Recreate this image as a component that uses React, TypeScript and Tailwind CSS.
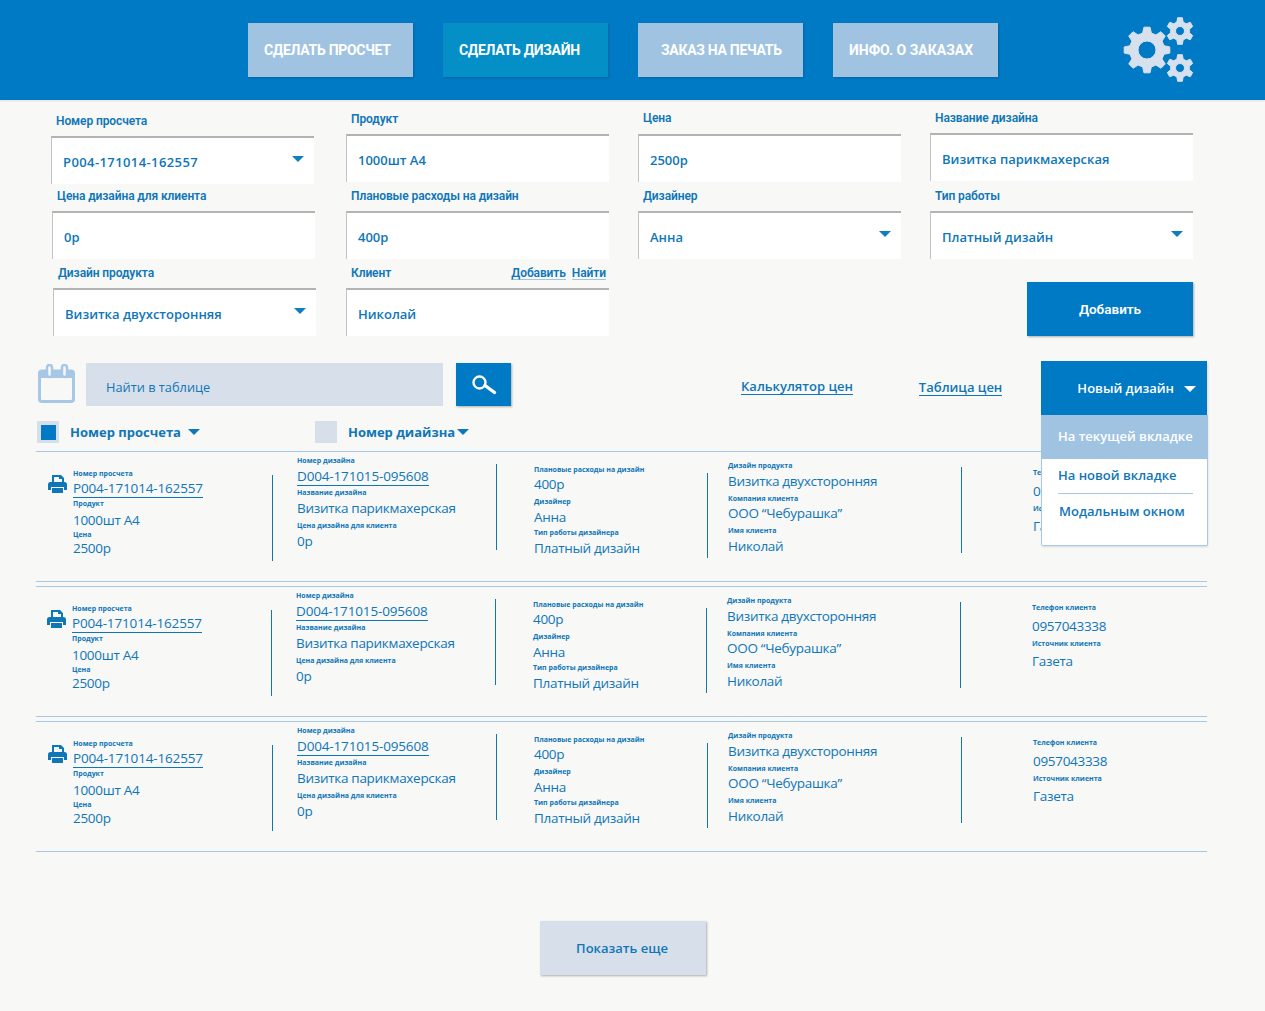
import type { ReactNode } from "react"

const blue = "text-[#0f76b8]"

function gearPath(cx: number, cy: number, outer: number, root: number, hole: number, teeth: number) {
  const pts: string[] = []
  const step = (Math.PI * 2) / teeth
  for (let i = 0; i < teeth; i++) {
    const a = i * step - Math.PI / 2
    const corners: [number, number][] = [
      [root, a - step * 0.32],
      [outer, a - step * 0.17],
      [outer, a + step * 0.17],
      [root, a + step * 0.32],
    ]
    for (const [r, t] of corners) {
      pts.push(`${(cx + r * Math.cos(t)).toFixed(2)} ${(cy + r * Math.sin(t)).toFixed(2)}`)
    }
  }
  const ring = `M${cx - hole} ${cy}a${hole} ${hole} 0 1 0 ${hole * 2} 0a${hole} ${hole} 0 1 0 ${-hole * 2} 0z`
  return `M${pts.join("L")}z${ring}`
}

function Gears() {
  return (
    <svg width="75" height="70" viewBox="0 0 75 70" className="ml-[123px] mt-[-7px]">
      <g fill="#d7e1ee" fillRule="evenodd" stroke="#d7e1ee" strokeWidth="1" strokeLinejoin="round">
        <path d={gearPath(26, 34, 23, 17.5, 9, 8)} />
        <path d={gearPath(59, 15, 13.5, 9.5, 4.5, 6)} />
        <path d={gearPath(59, 52, 13.5, 9.5, 4.5, 6)} />
      </g>
    </svg>
  )
}

function NavButton({ children, active, className = "" }: { children: ReactNode; active?: boolean; className?: string }) {
  return (
    <div
      className={`flex h-[54px] w-[165px] items-center pt-px text-[14px] font-bold text-white shadow-[1px_1px_2px_rgba(0,50,90,0.3)] font-['Roboto',sans-serif] ${
        active ? "bg-[#0490c7]" : "bg-[#a1c3e2]"
      } ${className}`}
    >
      {children}
    </div>
  )
}

function Triangle({ className }: { className: string }) {
  return <span className={`block h-0 w-0 border-x-[6px] border-t-[6px] border-x-transparent ${className}`} />
}

function Field({
  label,
  value,
  select,
  className = "",
  labelClass = "",
  valueClass = "",
  links,
}: {
  label: string
  value: string
  select?: boolean
  className?: string
  labelClass?: string
  valueClass?: string
  links?: boolean
}) {
  return (
    <div className={className}>
      <div className="mb-[6px] flex h-[18px] items-center justify-between">
        <span className={`text-[12px] leading-[18px] font-semibold tracking-[-0.1px] ${blue} font-['Roboto',sans-serif] ${labelClass}`}>
          {label}
        </span>
        {links && (
          <span className={`flex gap-[6px] text-[12px] font-semibold tracking-[-0.1px] ${blue} font-['Roboto',sans-serif]`}>
            <span className="border-b border-[#9fc3e3] leading-[12px]">Добавить</span>
            <span className="mr-[3px] border-b border-[#9fc3e3] leading-[12px]">Найти</span>
          </span>
        )}
      </div>
      <div className="flex h-[48px] items-center justify-between border-t-2 border-l border-t-[#b3b3b3] border-l-[#c4c4c4] bg-white pl-[11px] pr-[10px] pt-[3px]">
        <span className={`text-[13px] font-semibold ${blue} font-['Open_Sans',sans-serif] ${valueClass}`}>{value}</span>
        {select && <Triangle className="mt-[-7px] border-t-[#0f7dc2]" />}
      </div>
    </div>
  )
}

function Form() {
  return (
    <div className="flex h-[236px] pl-[51px]">
      <div className="mt-[12px] w-[263px]">
        <Field label="Номер просчета" value="P004-171014-162557" select labelClass="ml-[5px]" valueClass="tracking-[0.4px]" />
        <Field label="Цена дизайна для клиента" value="0р" className="-mr-px ml-px mt-[3px]" labelClass="ml-[5px]" />
        <Field label="Дизайн продукта" value="Визитка двухсторонняя" select className="-mr-[2px] ml-[2px] mt-[5px]" labelClass="ml-[5px]" />
      </div>
      <div className="ml-[32px] mt-[10px] w-[263px]">
        <Field label="Продукт" value="1000шт А4" labelClass="ml-[5px]" valueClass="mt-px" />
        <Field label="Плановые расходы на дизайн" value="400р" className="mt-[5px]" labelClass="ml-[5px]" />
        <Field label="Клиент" value="Николай" className="mt-[5px]" labelClass="ml-[5px]" links />
      </div>
      <div className="ml-[29px] mt-[10px] w-[263px]">
        <Field label="Цена" value="2500р" labelClass="ml-[5px] mt-[-2px]" />
        <Field label="Дизайнер" value="Анна" select className="mt-[5px]" labelClass="ml-[5px]" />
      </div>
      <div className="ml-[29px] mt-[9px] flex w-[263px] flex-col">
        <Field label="Название дизайна" value="Визитка парикмахерская" labelClass="ml-[5px]" />
        <Field label="Тип работы" value="Платный дизайн" select className="mt-[6px]" labelClass="ml-[5px]" />
        <div className="ml-auto mt-[23px] flex h-[54px] w-[166px] items-center justify-center bg-[#007ac4] pt-px text-[13.5px] font-semibold text-white shadow-[1px_1px_2px_rgba(0,0,0,0.3)] font-['Roboto',sans-serif]">
          Добавить
        </div>
      </div>
    </div>
  )
}

function Toolbar() {
  return (
    <div className="relative mt-[27px] flex h-[43px] items-start pl-[38px]">
      <svg width="38" height="40" viewBox="0 0 38 40" className="mt-[1px] shrink-0">
        <rect x="1.5" y="7" width="34" height="30.500" rx="2.500" fill="#f8f8f6" stroke="#a6c8e6" strokeWidth="3" />
        <path d="M3 7h31v7H3z" fill="#a6c8e6" />
        <rect x="9" y="1" width="5" height="12" rx="2.500" fill="#f8f8f6" stroke="#a6c8e6" strokeWidth="2.500" />
        <rect x="24" y="1" width="5" height="12" rx="2.500" fill="#f8f8f6" stroke="#a6c8e6" strokeWidth="2.500" />
      </svg>
      <div className={`ml-[10px] flex h-[43px] w-[357px] items-center bg-[#d7dfea] pl-[20px] pt-[7px] text-[12.8px] ${blue} font-['Open_Sans',sans-serif]`}>
        Найти в таблице
      </div>
      <div className="ml-[13px] flex h-[43px] w-[55px] items-center justify-center bg-[#007ac4] shadow-[1px_1px_2px_rgba(0,0,0,0.3)]">
        <svg width="26" height="22" viewBox="0 0 26 22" fill="none" stroke="white">
          <circle cx="8.500" cy="8.500" r="6" strokeWidth="2.400" />
          <path d="M14 11.500l9.500 7" strokeWidth="3.400" strokeLinecap="round" />
        </svg>
      </div>
      <span className={`ml-[230px] mt-[15px] border-b border-[#0f76b8] text-[13px] leading-[16px] font-semibold ${blue} font-['Open_Sans',sans-serif]`}>
        Калькулятор цен
      </span>
      <span className={`ml-[66px] mt-[16px] border-b border-[#0f76b8] text-[13px] leading-[16px] font-semibold ${blue} font-['Open_Sans',sans-serif]`}>
        Таблица цен
      </span>
      <div className="absolute left-[1041px] top-[-2px] z-10 w-[166px] shadow-[1px_1px_2px_rgba(0,0,0,0.12)]">
        <div className="flex h-[54px] items-center justify-end gap-[10px] bg-[#007ac4] pr-[11px] pt-[2px] text-[13px] font-semibold text-white font-['Open_Sans',sans-serif]">
          Новый дизайн
          <Triangle className="border-t-white" />
        </div>
        <div className={`-mr-px h-[131px] rounded-b-[2px] border border-t-0 border-[#a6c8e6] bg-white text-[13px] font-semibold ${blue} font-['Open_Sans',sans-serif]`}>
          <div className="-mx-px flex h-[44px] items-center bg-[#a1c3e2] pl-[17px] text-white">На текущей вкладке</div>
          <div className="ml-[16px] mr-[14px] flex h-[35px] items-center border-b border-[#a6c8e6] pb-[1px]">На новой вкладке</div>
          <div className="ml-[17px] mt-[8px]">Модальным окном</div>
        </div>
      </div>
    </div>
  )
}

function SortHeader() {
  return (
    <div className={`ml-[36px] mt-[15px] flex h-[31px] w-[1171px] items-start border-b border-[#a6c8e6] pl-px text-[13px] leading-[22px] font-bold ${blue} font-['Open_Sans',sans-serif]`}>
      <span className="flex h-[22px] w-[22px] items-center justify-center bg-[#d7dfea]">
        <span className="block h-[15px] w-[15px] bg-[#007ac4]" />
      </span>
      <span className="ml-[11px]">Номер просчета</span>
      <Triangle className="ml-[7px] mt-[8px] border-t-[#0f76b8]" />
      <span className="ml-[115px] h-[22px] w-[22px] bg-[#d7dfea]" />
      <span className="ml-[11px]">Номер диайзна</span>
      <Triangle className="ml-[2px] mt-[8px] border-t-[#0f76b8]" />
    </div>
  )
}

function Item({
  label,
  value,
  link,
  className = "",
  valueClass = "",
}: {
  label: string
  value: string
  link?: boolean
  className?: string
  valueClass?: string
}) {
  return (
    <div className={className}>
      <div className={`h-[12px] text-[7px] leading-[14px] font-bold ${blue} font-['Open_Sans',sans-serif]`}>{label}</div>
      <div className={`h-[18px] text-[13.5px] leading-[18px] ${link ? "tracking-[-0.15px]" : "tracking-[-0.3px]"} ${blue} font-['Open_Sans',sans-serif] ${valueClass}`}>
        {link ? <span className="inline-block border-b border-[#0f76b8] leading-[17px]">{value}</span> : value}
      </div>
    </div>
  )
}

function Divider({ className }: { className: string }) {
  return <div className={`w-px shrink-0 bg-[#1277ab] ${className}`} />
}

function Row({ className = "" }: { className?: string }) {
  return (
    <div className={`flex h-[129px] w-[1171px] items-start ${className}`}>
      <svg width="19" height="21" viewBox="0 0 19 21" className="ml-[12px] mt-[22px] shrink-0" fill="#0f76b8">
        <path d="M4 1h9l3 3v5h-2V5h-3V3H6v6H4z" />
        <path d="M2.500 8h14A2.500 2.500 0 0 1 19 10.500V16h-3v-3H3v3H0v-5.500A2.500 2.500 0 0 1 2.500 8z" />
        <path d="M4 14h11v5H4z" />
      </svg>
      <div className="ml-[6px] mt-[15px] w-[199px] shrink-0">
        <Item label="Номер просчета" value="P004-171014-162557" link />
        <Item label="Продукт" value="1000шт А4" valueClass="mt-[2px]" />
        <Item label="Цена" value="2500р" className="mt-[-1px]" valueClass="mt-[-1px]" />
      </div>
      <Divider className="mt-[23px] h-[86px]" />
      <div className="ml-[24px] mt-[2px] w-[199px] shrink-0">
        <Item label="Номер дизайна" value="D004-171015-095608" link valueClass="mt-px" />
        <Item label="Название дизайна" value="Визитка парикмахерская" className="mt-px" valueClass="mt-px" />
        <Item label="Цена дизайна для клиента" value="0р" className="mt-[2px]" valueClass="mt-px" />
      </div>
      <Divider className="mt-[12px] h-[86px]" />
      <div className="ml-[37px] mt-[11px] w-[173px] shrink-0">
        <Item label="Плановые расходы на дизайн" value="400р" />
        <Item label="Дизайнер" value="Анна" className="mt-[2px]" valueClass="mt-px" />
        <Item label="Тип работы дизайнера" value="Платный дизайн" valueClass="mt-px" />
      </div>
      <Divider className="mt-[21px] h-[85px]" />
      <div className="ml-[20px] mt-[7px] w-[233px] shrink-0">
        <Item label="Дизайн продукта" value="Визитка двухсторонняя" valueClass="mt-px" />
        <Item label="Компания клиента" value="ООО “Чебурашка”" className="mt-[2px]" />
        <Item label="Имя клиента" value="Николай" className="mt-[2px]" valueClass="mt-px" />
      </div>
      <Divider className="mt-[15px] h-[86px]" />
      <div className="ml-[71px] mt-[14px] shrink-0">
        <Item label="Телефон клиента" value="0957043338" valueClass="mt-[4px]" />
        <Item label="Источник клиента" value="Газета" className="mt-[2px]" valueClass="mt-[3px]" />
      </div>
    </div>
  )
}

export default function App() {
  return (
    <div className="min-h-[1011px] bg-[#f8f8f6]">
      <div className="flex h-[100px] items-start bg-[#007ac4] pl-[248px] pt-[23px] shadow-[0_1px_2px_rgba(0,0,0,0.1)]">
        <div className="flex gap-[30px]">
          <NavButton className="pl-[16px] tracking-[-0.3px]">СДЕЛАТЬ ПРОСЧЕТ</NavButton>
          <NavButton active className="pl-[16px] tracking-[-0.3px]">СДЕЛАТЬ ДИЗАЙН</NavButton>
          <NavButton className="pl-[23px] tracking-[-0.3px]">ЗАКАЗ НА ПЕЧАТЬ</NavButton>
          <NavButton className="pl-[16px]">ИНФО. О ЗАКАЗАХ</NavButton>
        </div>
        <Gears />
      </div>
      <Form />
      <Toolbar />
      <SortHeader />
      <div className="ml-[36px] w-[1171px]">
        <Row />
        <div className="h-[6px] border-y border-[#a6c8e6]" />
        <Row className="-ml-px" />
        <div className="h-[6px] border-y border-[#a6c8e6]" />
        <Row />
        <div className="h-px bg-[#a6c8e6]" />
      </div>
      <div className="ml-[540px] mt-[69px] flex h-[54px] w-[166px] items-center justify-center bg-[#d7dfea] pr-[2px] pt-px text-[13px] font-semibold shadow-[1px_1px_2px_rgba(0,0,0,0.3)]">
        <span className={`${blue} font-['Open_Sans',sans-serif]`}>Показать еще</span>
      </div>
    </div>
  )
}
